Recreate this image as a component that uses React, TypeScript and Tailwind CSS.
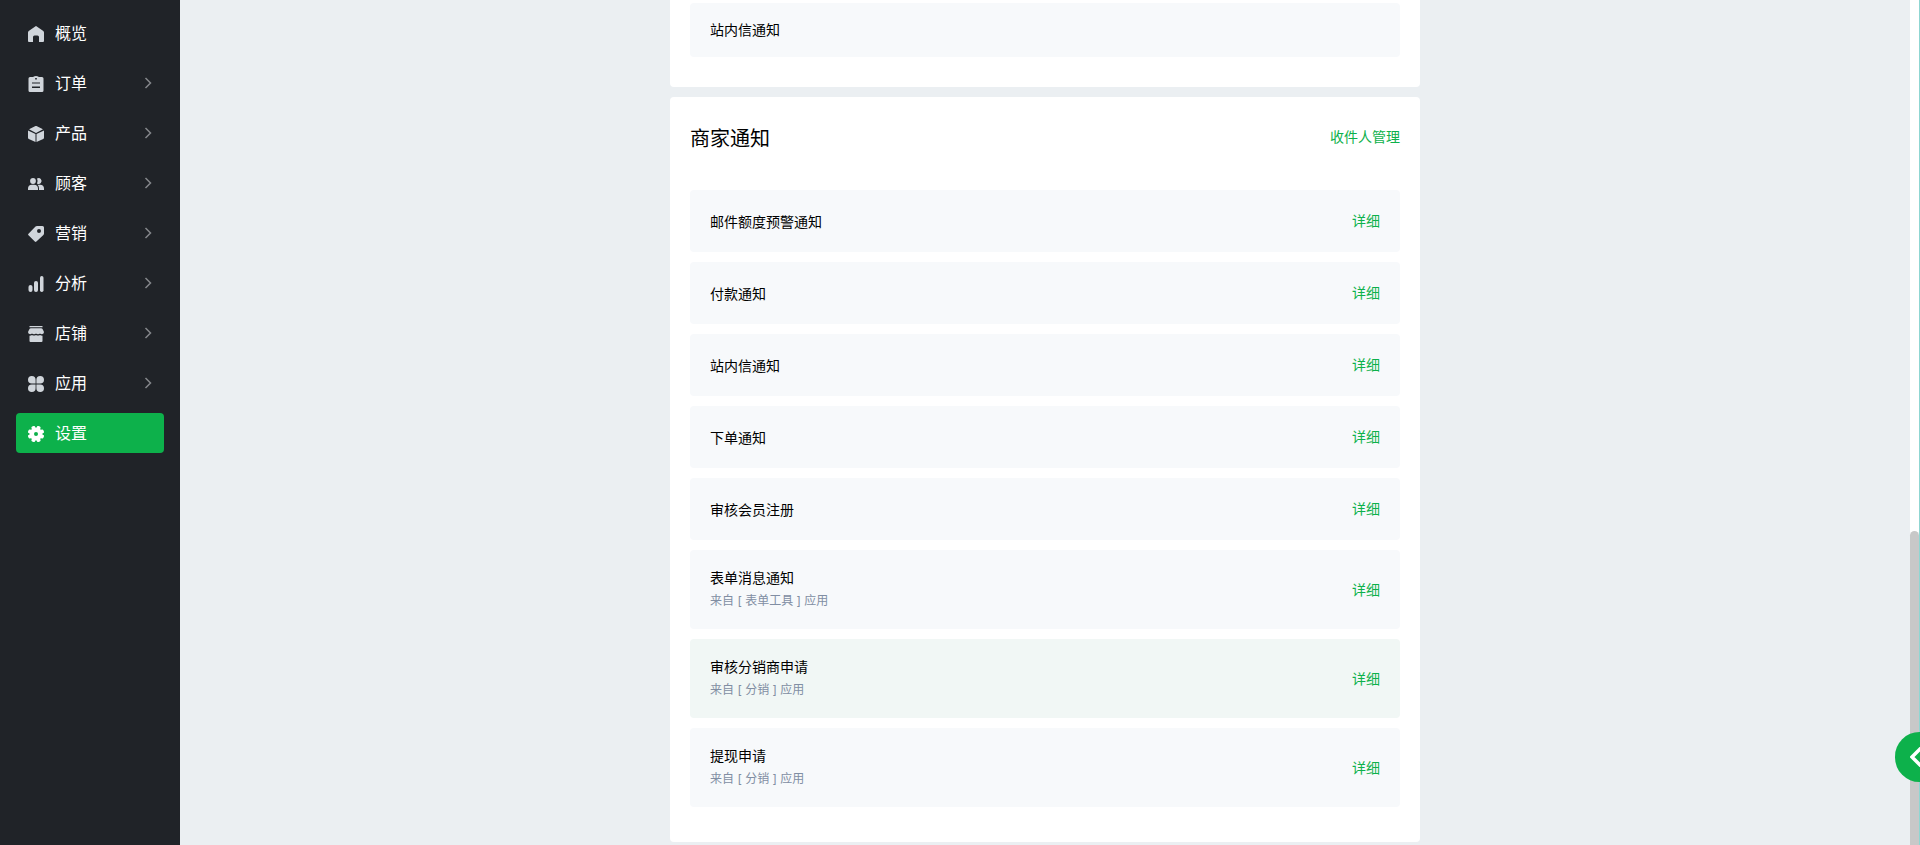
import type { ReactNode } from 'react';

interface NavItem { label: string; icon: ReactNode; active?: boolean; leaf?: boolean }

interface NoticeItem { title: string; from?: string; highlighted?: boolean }

const NAV: NavItem[] = [
  { label: '概览', leaf: true, icon: <path d="M7.200.4Q8-.2 8.800.4L15.300 5Q16 5.500 16 6.500V15Q16 16 15 16H11V11Q11 9.500 9.500 9.500H6.500Q5 9.500 5 11V16H1Q0 16 0 15V6.500Q0 5.500.7 5Z" /> },
  { label: '订单', icon: <path fillRule="evenodd" d="M5 1Q8-1 11 1H14Q15.500 1 15.500 2.500V14.500Q15.500 16 14 16H2Q.5 16 .5 14.500V2.500Q.5 1 2 1ZM7.200 2V3.500H8.800V2ZM4 6.500V7.500H12V6.500ZM4 10.500V12H12V10.500Z" /> },
  { label: '产品', icon: <path d="M7.500.1Q8 -.1 8.500.1L15 3.200 8 6.900 1 3.200ZM0 4.400 7.500 8.100V16L.8 13Q0 12.600 0 11.800ZM16 4.400 8.500 8.100V16L15.200 13Q16 12.600 16 11.800Z" /> },
  { label: '顾客', icon: <><circle cx="5" cy="5" r="2.900" /><path d="M9 2.600A2.900 2.900 0 1 1 9 7.400Q10.200 5 9 2.600ZM0 14V12.500Q0 8.700 4 8.700H6Q10 8.700 10 12.500V14ZM9.500 8.700H12Q16 8.700 16 12.500V14H11V12.500Q11 10 9.500 8.700Z" /></> },
  { label: '营销', icon: <path fillRule="evenodd" d="M9 0H14.500Q16 0 16 1.500V7.500Q16 8.300 15.400 8.900L8.400 15.500Q7.600 16.300 6.800 15.500L.5 9.300Q-.3 8.500.5 7.700L7.500.6Q8.100 0 9 0ZM11 3A2 2 0 1 0 11 7A2 2 0 1 0 11 3Z" /> },
  { label: '分析', icon: <><rect x="0.500" y="9" width="4" height="7" rx="2" /><rect x="6" y="5" width="4" height="11" rx="2" /><rect x="12" y="0" width="3.500" height="16" rx="1.700" /></> },
  { label: '店铺', icon: <path d="M1.500 0H14.500V1.300H1.500ZM3 2.300H13Q14.300 2.300 14.800 3.500L16 6Q16 8 14 8.300Q12.500 8.200 12 7.500Q11.500 8.300 10 8.300Q8.500 8.300 8 7.500Q7.500 8.300 6 8.300Q4.500 8.300 4 7.500Q3.500 8.200 2 8.300Q0 8 0 6L1.200 3.500Q1.700 2.300 3 2.300ZM1.500 9.700Q3 9.700 4 9Q6 10.200 8 9Q10 10.200 12 9Q13 9.700 14.500 9.700V15Q14.500 16 13.500 16H2.500Q1.500 16 1.500 15Z" /> },
  { label: '应用', icon: <path d="M3.800 0A3.800 3.800 0 0 1 7.600 3.800V7.600H3.800A3.800 3.800 0 0 1 3.800 0ZM12.200 0A3.800 3.800 0 0 1 12.200 7.600H8.400V3.800A3.800 3.800 0 0 1 12.200 0ZM3.800 8.400H7.600V12.200A3.800 3.800 0 1 1 3.800 8.400ZM8.400 8.400H12.200A3.800 3.800 0 1 1 8.400 12.200Z" /> },
  {
    label: '设置', leaf: true, active: true, icon: (
      <>
        <circle cx="8" cy="8" r="6.500" />
        {[22.5, 67.5, 112.5, 157.5].map(angle => (
          <rect key={angle} x="6.100" y="-0.300" width="3.800" height="16.600" rx="1.200" transform={`rotate(${angle} 8 8)`} />
        ))}
        <circle cx="8" cy="8" r="2" className="fill-[#0db14b]" />
      </>
    ),
  },
];

const MERCHANT_NOTICES: NoticeItem[] = [
  { title: '邮件额度预警通知' },
  { title: '付款通知' },
  { title: '站内信通知' },
  { title: '下单通知' },
  { title: '审核会员注册' },
  { title: '表单消息通知', from: '表单工具' },
  { title: '审核分销商申请', from: '分销', highlighted: true },
  { title: '提现申请', from: '分销' },
];

function Sidebar() {
  return (
    <nav className="w-[180px] shrink-0 bg-[#202328] px-4 py-[13px] flex flex-col gap-2.5">
      {NAV.map(item => (
        <a key={item.label} href="#" className={`flex items-center h-10 rounded px-3 text-base text-white ${item.active ? 'bg-[#0db14b]' : ''}`}>
          <svg viewBox="0 0 16 16" className={`w-4 h-4 mr-[11px] mt-0.5 ${item.active ? 'fill-white' : 'fill-[#d0d5db]'}`}>{item.icon}</svg>
          <span className="flex-1">{item.label}</span>
          {!item.leaf && (
            <svg viewBox="0 0 8 12" className="w-2 h-3 fill-none stroke-[#84878b]" strokeWidth="1.500">
              <path d="M1.500 1 6.500 6 1.500 11" />
            </svg>
          )}
        </a>
      ))}
    </nav>
  );
}

function NoticeRow({ item }: { item: NoticeItem }) {
  return (
    <li className={`flex items-center justify-between rounded px-5 ${item.from ? 'h-[79px]' : 'h-[62px]'} ${item.highlighted ? 'bg-[#f1f7f5]' : 'bg-[#f7f9fb]'}`}>
      <div className={item.from ? 'pb-0.5' : 'pt-0.5'}>
        <p className="text-sm leading-6">{item.title}</p>
        {item.from && <p className="text-xs leading-[22px] text-[#818ea3]">来自 [ {item.from} ] 应用</p>}
      </div>
      <a href="#" className="text-sm text-[#0db14b]">详细</a>
    </li>
  );
}

export default function App() {
  return (
    <div className="flex h-screen overflow-hidden bg-[#ebeff2] text-black font-[Inter,'Noto_Sans_CJK_SC',sans-serif]">
      <Sidebar />
      <main className="flex-1 flex flex-col items-center gap-2.5 overflow-hidden">
        <section className="w-full max-w-[750px] bg-white rounded-b px-5 pt-[3px] pb-[30px]">
          <div className="flex items-center h-[54px] rounded bg-[#f7f9fb] px-5 text-sm">站内信通知</div>
        </section>
        <section className="w-full max-w-[750px] bg-white rounded px-5 pt-[25px] pb-[35px]">
          <header className="flex items-center justify-between h-8 mb-9">
            <h2 className="text-xl pt-0.5">商家通知</h2>
            <a href="#" className="text-sm text-[#0db14b] pb-0.5">收件人管理</a>
          </header>
          <ul className="flex flex-col gap-2.5">
            {MERCHANT_NOTICES.map(item => <NoticeRow key={item.title} item={item} />)}
          </ul>
        </section>
      </main>
      <div className="w-2.5 shrink-0 bg-white border-r border-[#8fd6d2] flex flex-col justify-end">
        <div className="h-[314px] rounded-t-full bg-[#c8c8c8]" />
      </div>
      <button aria-label="展开" className="fixed -right-6 bottom-[63px] w-[49px] h-[50px] rounded-full bg-[#0db14b] pl-[15px]">
        <svg viewBox="0 0 12 20" className="w-3 h-5 fill-none stroke-white" strokeWidth="3.500">
          <path d="M11 1 2 10 11 19" />
        </svg>
      </button>
    </div>
  );
}
